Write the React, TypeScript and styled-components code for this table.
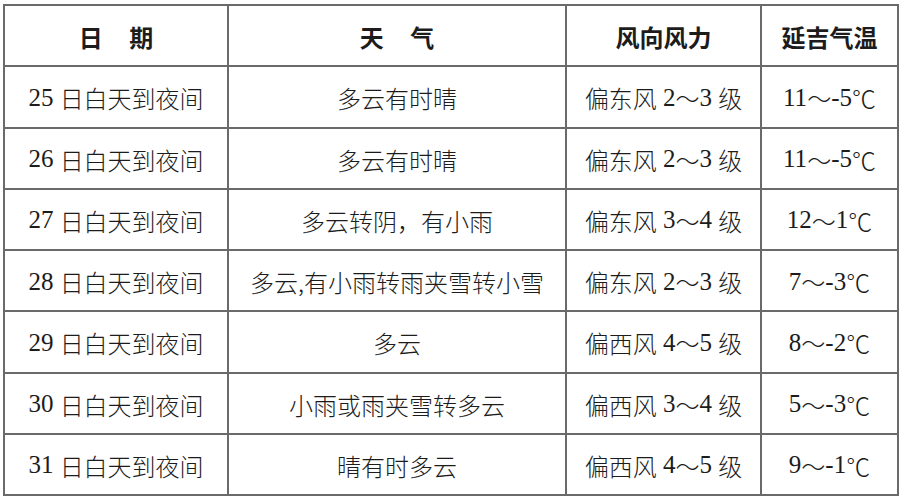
import React from "react";
import styled, { createGlobalStyle } from "styled-components";

const Global = createGlobalStyle`
  html, body { margin: 0; padding: 0; background: #fff; }
  body { width: 903px; height: 500px; overflow: hidden; }
`;

const Page = styled.div`
  padding: 4px 0 0 3px;
`;

const Grid = styled.div`
  display: grid;
  grid-template-columns: 224px 338px 195px 137px;
  grid-template-rows: repeat(8, 1fr);
  width: 896px;
  height: 492px;
  box-sizing: border-box;
  border-left: 2px solid #6a6a6a;
  border-top: 2px solid #6a6a6a;
  color: #1c1c1c;
`;

const Cell = styled.div<{ $head?: boolean }>`
  display: flex;
  align-items: center;
  justify-content: center;
  border-right: 2px solid #6a6a6a;
  border-bottom: 2px solid #6a6a6a;
  font-size: 24px;
  font-weight: ${(p) => (p.$head ? 700 : 300)};
  font-family: "Noto Sans CJK SC", sans-serif;
  white-space: nowrap;
  padding-top: 2px;
  box-sizing: border-box;
`;

const Num = styled.span`
  font-family: "Liberation Serif", serif;
  font-weight: 400;
  font-size: 25px;
`;

const Wave = styled.span`
  font-family: "Noto Sans CJK SC", sans-serif;
  font-weight: 300;
  font-size: 24px;
`;

const Wide = styled.span`
  letter-spacing: 1.1em;
  margin-right: -1.1em;
`;

const Range = ({ text }: { text: string }) => {
  const [a, b] = text.split("～");
  return (
    <>
      <Num>{a}</Num>
      <Wave>～</Wave>
      <Num>{b}</Num>
    </>
  );
};

const rows = [
  ["25", "多云有时晴", "东", "2～3", "11～-5"],
  ["26", "多云有时晴", "东", "2～3", "11～-5"],
  ["27", "多云转阴，有小雨", "东", "3～4", "12～1"],
  ["28", "多云,有小雨转雨夹雪转小雪", "东", "2～3", "7～-3"],
  ["29", "多云", "西", "4～5", "8～-2"],
  ["30", "小雨或雨夹雪转多云", "西", "3～4", "5～-3"],
  ["31", "晴有时多云", "西", "4～5", "9～-1"],
];

export default function App() {
  return (
    <Page>
      <Global />
      <Grid>
        <Cell $head><Wide>日期</Wide></Cell>
        <Cell $head><Wide>天气</Wide></Cell>
        <Cell $head>风向风力</Cell>
        <Cell $head>延吉气温</Cell>
        {rows.map((r) => (
          <React.Fragment key={r[0]}>
            <Cell>
              <Num>{r[0]}&nbsp;</Num>
              <span>日白天到夜间</span>
            </Cell>
            <Cell>{r[1]}</Cell>
            <Cell>
              <span>偏{r[2]}风</span>
              <Num>&nbsp;</Num>
              <Range text={r[3]} />
              <Num>&nbsp;</Num>
              <span>级</span>
            </Cell>
            <Cell>
              <Range text={r[4]} />
              <Wave>℃</Wave>
            </Cell>
          </React.Fragment>
        ))}
      </Grid>
    </Page>
  );
}
